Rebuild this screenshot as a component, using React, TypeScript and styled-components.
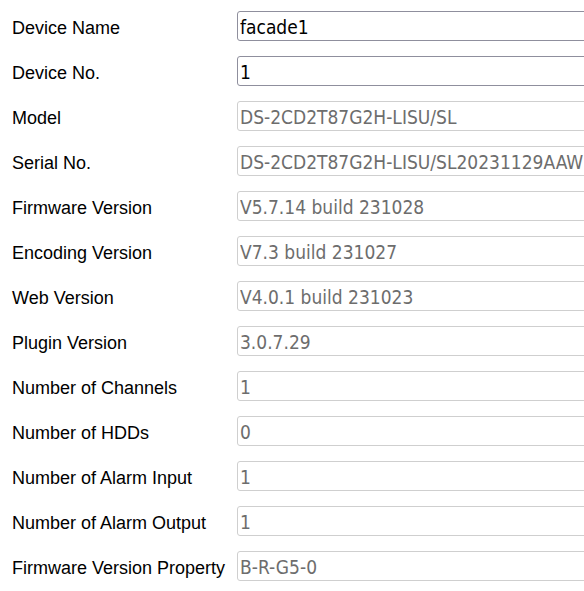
import React from "react";
import styled, { createGlobalStyle } from "styled-components";

const Global = createGlobalStyle`
  html, body { margin: 0; padding: 0; background: #fff; overflow: hidden; }
  * { box-sizing: border-box; }
`;

const Form = styled.div`
  display: grid;
  grid-template-columns: 225px 380px;
  row-gap: 15px;
  padding: 11px 0 0 12px;
  width: 584px;
  overflow: hidden;
`;

const Label = styled.div`
  font-family: "Liberation Sans", Arial, sans-serif;
  font-size: 18px;
  color: #000;
  height: 30px;
  padding-top: 4px;
  display: flex;
  align-items: center;
  white-space: nowrap;
`;

const Field = styled.input<{ $editable?: boolean }>`
  height: 30px;
  width: 380px;
  margin: 0;
  padding: 2px 2px 0;
  border: 1px solid ${(p) => (p.$editable ? "#8f8f9d" : "#cfcfcf")};
  border-radius: 3px;
  background: #fff;
  font-family: "DejaVu Sans Condensed", "DejaVu Sans", sans-serif;
  font-size: 19px;
  color: ${(p) => (p.$editable ? "#000" : "#6d6d6d")};
  outline: none;
  &:disabled {
    color: #6d6d6d;
    background: #fff;
    -webkit-text-fill-color: #6d6d6d;
    opacity: 1;
  }
`;

const rows: { label: string; value: string; editable?: boolean }[] = [
  { label: "Device Name", value: "facade1", editable: true },
  { label: "Device No.", value: "1", editable: true },
  { label: "Model", value: "DS-2CD2T87G2H-LISU/SL" },
  { label: "Serial No.", value: "DS-2CD2T87G2H-LISU/SL20231129AAWRFD1234567" },
  { label: "Firmware Version", value: "V5.7.14 build 231028" },
  { label: "Encoding Version", value: "V7.3 build 231027" },
  { label: "Web Version", value: "V4.0.1 build 231023" },
  { label: "Plugin Version", value: "3.0.7.29" },
  { label: "Number of Channels", value: "1" },
  { label: "Number of HDDs", value: "0" },
  { label: "Number of Alarm Input", value: "1" },
  { label: "Number of Alarm Output", value: "1" },
  { label: "Firmware Version Property", value: "B-R-G5-0" },
];

export default function App() {
  return (
    <>
      <Global />
      <Form>
        {rows.map((r) => (
          <React.Fragment key={r.label}>
            <Label>{r.label}</Label>
            <Field
              $editable={r.editable}
              defaultValue={r.value}
              disabled={!r.editable}
              readOnly={!r.editable}
            />
          </React.Fragment>
        ))}
      </Form>
    </>
  );
}
